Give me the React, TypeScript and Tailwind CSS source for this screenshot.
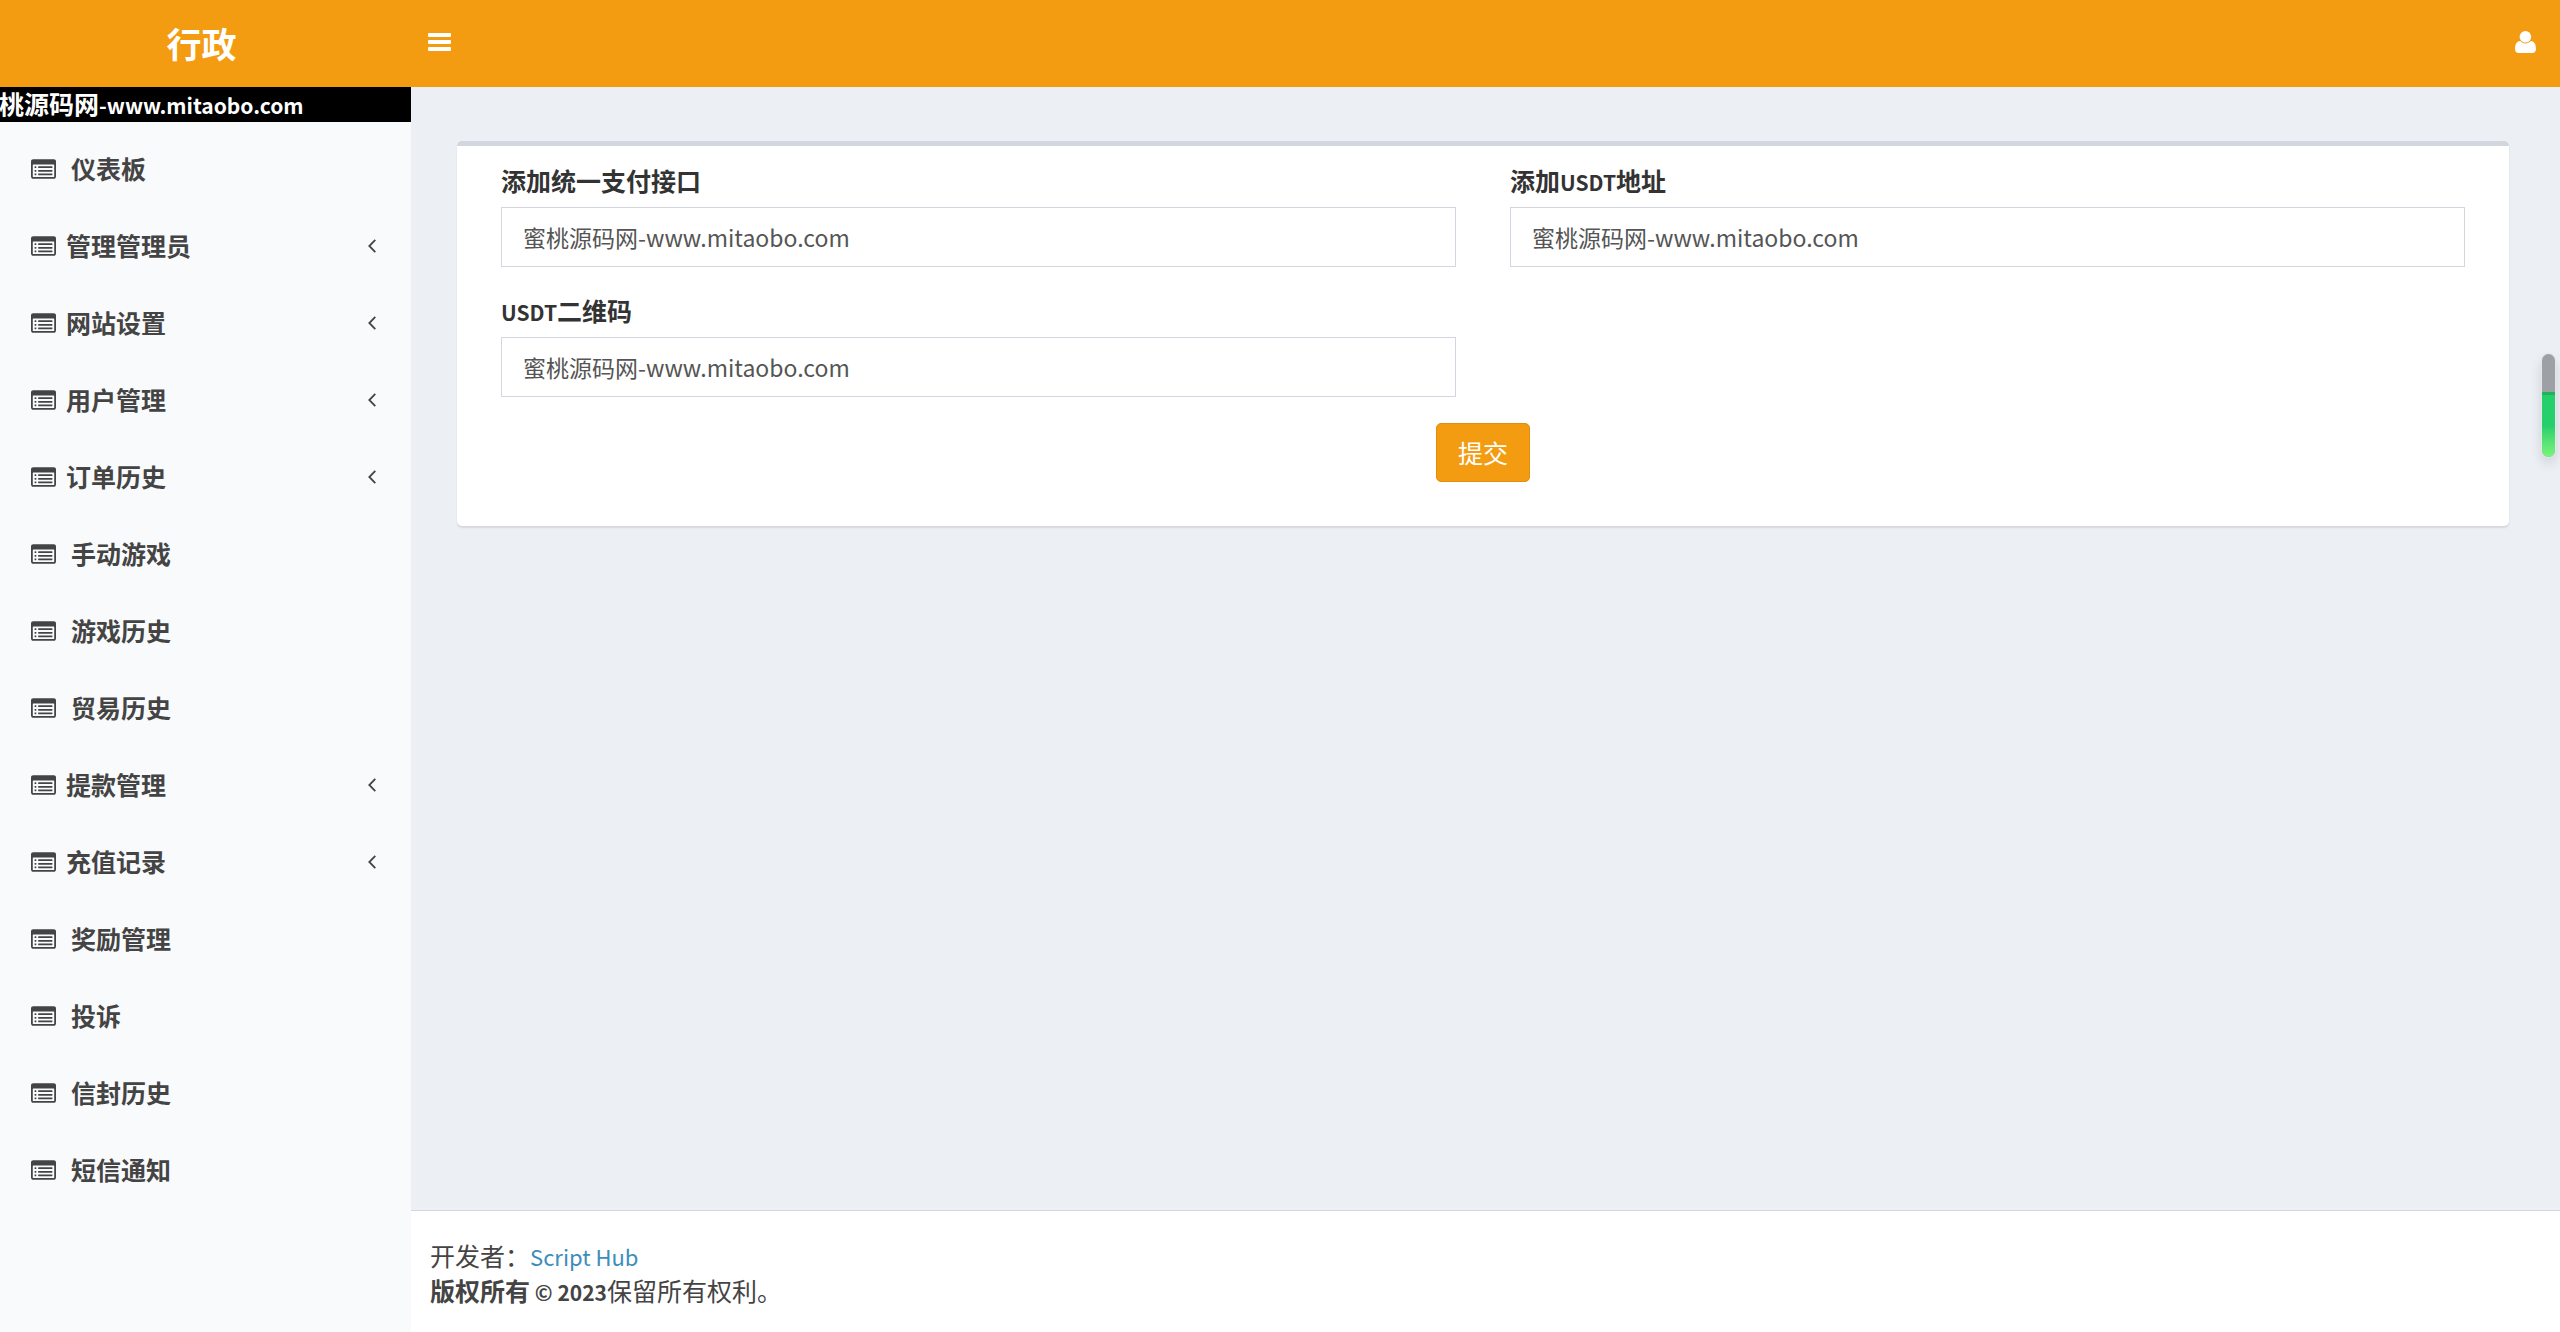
import React from "react";

type MenuItem = { label: string; tree?: boolean };

const menu: MenuItem[] = [
  { label: "仪表板" },
  { label: "管理管理员", tree: true },
  { label: "网站设置", tree: true },
  { label: "用户管理", tree: true },
  { label: "订单历史", tree: true },
  { label: "手动游戏" },
  { label: "游戏历史" },
  { label: "贸易历史" },
  { label: "提款管理", tree: true },
  { label: "充值记录", tree: true },
  { label: "奖励管理" },
  { label: "投诉" },
  { label: "信封历史" },
  { label: "短信通知" },
];

function ListIcon() {
  return (
    <svg viewBox="0 128 1792 1408" className="h-5 w-[25px] shrink-0" fill="currentColor" aria-hidden="true">
      <path d="M384 1184v64q0 13-9.5 22.5t-22.5 9.5h-64q-13 0-22.5-9.5t-9.5-22.5v-64q0-13 9.5-22.5t22.5-9.5h64q13 0 22.5 9.5t9.5 22.5zm0-256v64q0 13-9.5 22.5t-22.5 9.5h-64q-13 0-22.5-9.5t-9.5-22.5v-64q0-13 9.5-22.5t22.5-9.5h64q13 0 22.5 9.5t9.5 22.5zm0-256v64q0 13-9.5 22.5t-22.5 9.5h-64q-13 0-22.5-9.5t-9.5-22.5v-64q0-13 9.5-22.5t22.5-9.5h64q13 0 22.5 9.5t9.5 22.5zm1152 512v64q0 13-9.5 22.5t-22.5 9.5h-960q-13 0-22.5-9.5t-9.5-22.5v-64q0-13 9.5-22.5t22.5-9.5h960q13 0 22.5 9.5t9.5 22.5zm0-256v64q0 13-9.5 22.5t-22.5 9.5h-960q-13 0-22.5-9.5t-9.5-22.5v-64q0-13 9.5-22.5t22.5-9.5h960q13 0 22.5 9.5t9.5 22.5zm0-256v64q0 13-9.5 22.5t-22.5 9.5h-960q-13 0-22.5-9.5t-9.5-22.5v-64q0-13 9.5-22.5t22.5-9.5h960q13 0 22.5 9.5t9.5 22.5zm128 704v-832q0-13-9.5-22.5t-22.5-9.5h-1472q-13 0-22.5 9.5t-9.5 22.5v832q0 13 9.5 22.5t22.5 9.5h1472q13 0 22.5-9.5t9.5-22.5zm128-1088v1088q0 66-47 113t-113 47h-1472q-66 0-113-47t-47-113v-1088q0-66 47-113t113-47h1472q66 0 113 47t47 113z" />
    </svg>
  );
}

function AngleLeft() {
  return (
    <svg viewBox="0 0 8 14" className="ml-auto h-[14px] w-2" fill="none" stroke="currentColor" strokeWidth="1.8" aria-hidden="true">
      <path d="M7.3 0.8 1.3 7l6 6.2" />
    </svg>
  );
}

function Field({ id, children }: { id: string; children: React.ReactNode }) {
  return (
    <div>
      <label htmlFor={id} className="mb-[9px] block h-[35px] font-bold leading-[35px] text-[#333]">
        {children}
      </label>
      <input
        id={id}
        type="text"
        defaultValue="蜜桃源码网-www.mitaobo.com"
        className="block h-[60px] w-full border border-[#d2d6de] bg-white px-[21px] text-[23px] text-[#555] outline-none"
      />
    </div>
  );
}

export default function App() {
  return (
    <div className="flex min-h-screen flex-col bg-[#ecf0f5] font-['Noto_Sans_CJK_SC',sans-serif] text-[25px] leading-[35px] text-[#444]">
      <header className="flex h-[87px] items-center bg-[#f39c12] pb-[3px] text-white">
        <a href="#" className="w-[411px] shrink-0 pr-2 text-center text-[35px] font-bold">
          行政
        </a>
        <button type="button" aria-label="菜单" className="ml-[17px]">
          <svg viewBox="0 0 23 18" className="h-[18px] w-[23px]" fill="currentColor">
            <rect width="23" height="4" rx="1" />
            <rect y="7" width="23" height="4" rx="1" />
            <rect y="14" width="23" height="4" rx="1" />
          </svg>
        </button>
        <button type="button" aria-label="用户" className="mr-6 ml-auto">
          <svg viewBox="0 0 21 22" className="h-[22px] w-[21px]" fill="currentColor">
            <circle cx="10.4" cy="5.8" r="5.8" />
            <path d="M5.2 10C2 10 0 13 0 18.3 0 20.6 1.6 22 3.6 22h13.8c2 0 3.6-1.4 3.6-3.7C21 13 19 10 15.8 10 14.4 11.6 12.6 12.5 10.5 12.5S6.6 11.6 5.2 10z" />
          </svg>
        </button>
      </header>

      <div className="flex flex-1">
        <aside className="w-[411px] shrink-0 bg-[#f9fafc]">
          <div className="flex h-[35px] overflow-hidden bg-black leading-[33px] font-bold whitespace-nowrap text-white">
            <span className="-ml-[26px]">
              蜜桃源码网<span className="text-[21px] leading-none">-www.mitaobo.com</span>
            </span>
          </div>
          <nav className="pt-2 font-bold">
            <ul>
              {menu.map((item) => (
                <li key={item.label}>
                  <a href="#" className="flex h-[77px] items-center pr-[35px] pl-[31px]">
                    <ListIcon />
                    <span className={item.tree ? "ml-[10px]" : "ml-[15px]"}>{item.label}</span>
                    {item.tree && <AngleLeft />}
                  </a>
                </li>
              ))}
            </ul>
          </nav>
        </aside>

        <div className="flex min-w-0 flex-1 flex-col">
          <main className="flex-1 pt-[54px] pr-[51px] pl-[46px]">
            <form className="rounded-[5px] border-t-[5px] border-[#d2d6de] bg-white px-[44px] pt-[17px] pb-[44px] shadow-[0_2px_2px_rgba(0,0,0,0.1)]">
              <div className="grid grid-cols-2 gap-x-[54px] gap-y-[26px]">
                <Field id="upi">添加统一支付接口</Field>
                <Field id="usdt">
                  添加<span className="text-[21px] leading-none">USDT</span>地址
                </Field>
                <Field id="qr">
                  <span className="text-[21px] leading-none">USDT</span>二维码
                </Field>
              </div>
              <div className="mt-[26px] flex justify-center">
                <button type="submit" className="h-[59px] rounded-[5px] border border-[#e08e0b] bg-[#f39c12] px-[21px] text-white">
                  提交
                </button>
              </div>
            </form>
          </main>
          <footer className="border-t border-[#d2d6de] bg-white pt-[27px] pb-6 pl-[19px]">
            <p>
              开发者：
              <a href="#" className="text-[22px] leading-none text-[#3c8dbc]">
                Script Hub
              </a>
            </p>
            <p>
              <strong>
                版权所有<span className="text-[21px] leading-none"> © 2023</span>
              </strong>
              保留所有权利。
            </p>
          </footer>
        </div>
      </div>

      <div className="fixed top-[354px] right-[5px] flex h-[103px] w-[13px] flex-col overflow-hidden rounded-full bg-[#9da0a4] shadow-[0_0_0_1px_#e4e6e8,0_6px_12px_rgba(0,0,0,0.15)]">
        <div className="mt-[38px] flex-1 border-t-[3px] border-[#1fb35c] bg-linear-to-b from-[#25d06c] from-50% to-[#78f57c]" />
      </div>
    </div>
  );
}
